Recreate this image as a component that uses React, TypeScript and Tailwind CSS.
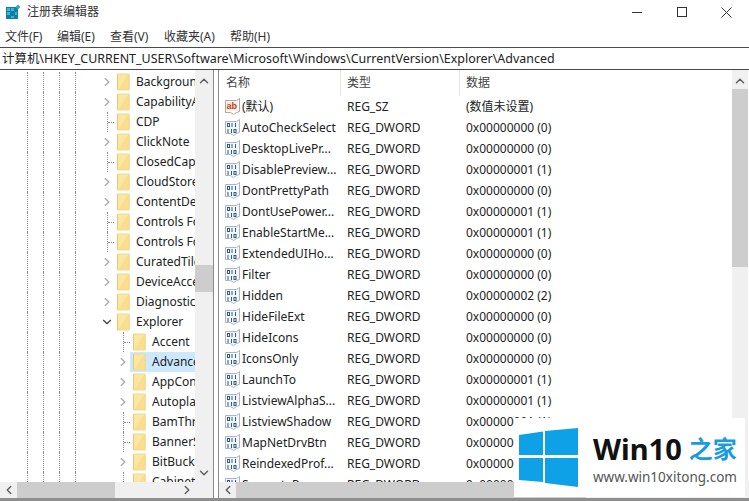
import React from "react";
import { ChevronDown, ChevronLeft, ChevronRight, ChevronUp } from "lucide-react";

const font = "font-['Noto_Sans','Noto_Sans_CJK_SC',sans-serif]";

const menus = [
  { label: "文件(F)", width: "w-[52px]" },
  { label: "编辑(E)", width: "w-[53px]" },
  { label: "查看(V)", width: "w-[54px]" },
  { label: "收藏夹(A)", width: "w-[66px]" },
  { label: "帮助(H)", width: "w-[52px]" },
];

// level 1 = child of CurrentVersion, level 2 = child of Explorer
const tree = [
  { name: "Background", level: 1, kind: "closed" },
  { name: "CapabilityAccessManager", level: 1, kind: "closed" },
  { name: "CDP", level: 1, kind: "leaf" },
  { name: "ClickNote", level: 1, kind: "closed" },
  { name: "ClosedCaptioning", level: 1, kind: "leaf" },
  { name: "CloudStore", level: 1, kind: "closed" },
  { name: "ContentDeliveryManager", level: 1, kind: "closed" },
  { name: "Controls Folder", level: 1, kind: "leaf" },
  { name: "Controls Folder", level: 1, kind: "leaf" },
  { name: "CuratedTileCollections", level: 1, kind: "closed" },
  { name: "DeviceAccess", level: 1, kind: "closed" },
  { name: "Diagnostics", level: 1, kind: "closed" },
  { name: "Explorer", level: 1, kind: "open" },
  { name: "Accent", level: 2, kind: "leaf" },
  { name: "Advanced", level: 2, kind: "closed", selected: true },
  { name: "AppContract", level: 2, kind: "closed" },
  { name: "Autoplay", level: 2, kind: "closed" },
  { name: "BamThrottling", level: 2, kind: "leaf" },
  { name: "BannerStore", level: 2, kind: "leaf" },
  { name: "BitBucket", level: 2, kind: "closed" },
  { name: "CabinetState", level: 2, kind: "leaf" },
];

const values = [
  ["AutoCheckSelect", "0x00000000 (0)"],
  ["DesktopLivePr...", "0x00000000 (0)"],
  ["DisablePreview...", "0x00000001 (1)"],
  ["DontPrettyPath", "0x00000000 (0)"],
  ["DontUsePower...", "0x00000001 (1)"],
  ["EnableStartMe...", "0x00000001 (1)"],
  ["ExtendedUIHo...", "0x00000000 (0)"],
  ["Filter", "0x00000000 (0)"],
  ["Hidden", "0x00000002 (2)"],
  ["HideFileExt", "0x00000000 (0)"],
  ["HideIcons", "0x00000000 (0)"],
  ["IconsOnly", "0x00000000 (0)"],
  ["LaunchTo", "0x00000001 (1)"],
  ["ListviewAlphaS...", "0x00000001 (1)"],
  ["ListviewShadow", "0x00000001 (1)"],
  ["MapNetDrvBtn", "0x00000000 (0)"],
  ["ReindexedProf...", "0x00000000 (0)"],
  ["SeparateProcess", "0x00000000 (0)"],
];

const RegeditIcon = () => (
  <svg width="16" height="16" viewBox="0 0 16 16" className="shrink-0">
    <rect x="1" y="3" width="12" height="12" fill="#0f7fa8" />
    <g fill="#3fb4d8">
      <rect x="2" y="4" width="3" height="3" />
      <rect x="6" y="4" width="3" height="3" />
      <rect x="2" y="8" width="3" height="3" />
      <rect x="10" y="8" width="2" height="3" />
      <rect x="6" y="12" width="3" height="2" />
    </g>
    <path d="M13 0.5l2.5 2.5-2.5 2.5-2.5-2.5z" fill="#35a5cc" />
  </svg>
);

const Folder = () => (
  <svg width="13" height="18" viewBox="0 0 13 18" className="shrink-0">
    <path d="M0.5 1h11.5v16h-11.5z" fill="#fbe7a1" stroke="#efd993" />
    <path d="M10 3l3-2v16h-12z" fill="#f6d77f" opacity="0.55" />
    <path d="M0.5 1v16" stroke="#e6c877" />
  </svg>
);

const Paper = ({ fill, stroke }: { fill: string; stroke: string }) => (
  <path d="M0.5 2.5h11l3 -2v13l-3 1 -3 2 -3 -2h-5z" fill={fill} stroke={stroke} />
);

const StringIcon = () => (
  <svg width="15" height="17" viewBox="0 0 15 17" className="shrink-0">
    <Paper fill="#fff" stroke="#a9a9a9" />
    <rect x="1.5" y="3.5" width="11" height="9" fill="#fbe9dd" />
    <text x="1.5" y="11" fontSize="9" fontWeight="700" fontFamily="Liberation Sans" fill="#c0431b">
      ab
    </text>
  </svg>
);

// binary 011 / 110 on a sheet of paper
const DwordIcon = () => (
  <svg width="15" height="17" viewBox="0 0 15 17" className="shrink-0">
    <Paper fill="#f4f7fb" stroke="#aab4c2" />
    <g fill="none" stroke="#2c5a94">
      <rect x="2.5" y="4.5" width="2" height="3" />
      <path d="M7 4v4M10.5 4v4" />
      <path d="M3 10v4M6.5 10v4" />
      <rect x="9" y="10.5" width="2" height="3" />
    </g>
  </svg>
);

const TreeRow = ({ item }: { item: (typeof tree)[number] }) => (
  <div className="flex h-5 shrink-0 items-center pl-[27px]">
    {[0, 1, 2, 3].map((i) => (
      <div key={i} className="h-full w-4 shrink-0 border-l border-dotted border-[#8c8c8c]" />
    ))}
    <div className={item.level === 2 ? "w-[25px] shrink-0" : "w-[9px] shrink-0"} />
    <div className="flex h-full w-[14px] shrink-0 items-center justify-center">
      {item.kind === "closed" && <ChevronRight size={14} strokeWidth={2} className="text-[#a6a6a6]" />}
      {item.kind === "open" && <ChevronDown size={14} strokeWidth={2} className="text-[#404040]" />}
      {item.kind === "leaf" && (
        <div className="ml-[7px] flex h-full w-[7px] items-center border-l border-dotted border-[#8c8c8c]">
          <div className="w-full border-t border-dotted border-[#8c8c8c]" />
        </div>
      )}
    </div>
    <div
      className={`flex h-full min-w-0 flex-1 items-center gap-[6px] overflow-hidden pl-[3px] ${
        item.selected ? "bg-[#cce8ff]" : ""
      }`}
    >
      <Folder />
      <span className="whitespace-nowrap">{item.name}</span>
    </div>
  </div>
);

const ValueRow = ({ icon, name, type, data }: { icon: React.ReactNode; name: string; type: string; data: string }) => (
  <div className="flex h-[21px] shrink-0 items-center">
    <div className="flex w-[122px] shrink-0 items-center gap-[2px] overflow-hidden pl-[6px]">
      {icon}
      <span className="whitespace-nowrap">{name}</span>
    </div>
    <div className="w-[119px] shrink-0 pl-[6px]">{type}</div>
    <div className="pl-[6px] whitespace-nowrap">{data}</div>
  </div>
);

const App = () => {
  return (
    <div className={`relative flex h-[501px] w-[749px] flex-col overflow-hidden bg-white text-[12px] text-[#222] ${font}`}>
      {/* title bar */}
      <div className="flex h-6 shrink-0 items-center">
        <div className="flex flex-1 items-center gap-[6px] pl-[5px] text-[12px] text-[#333]">
          <RegeditIcon />
          <span>注册表编辑器</span>
        </div>
        <div className="flex h-full w-[45px] items-center justify-center">
          <div className="h-px w-[10px] bg-[#333]" />
        </div>
        <div className="flex h-full w-[45px] items-center justify-center">
          <div className="h-[10px] w-[10px] border border-[#333]" />
        </div>
        <div className="flex h-full w-[45px] items-center justify-center">
          <svg width="11" height="11" viewBox="0 0 11 11">
            <path d="M0.5 0.5l10 10M10.5 0.5l-10 10" stroke="#333" fill="none" />
          </svg>
        </div>
      </div>

      {/* menu */}
      <div className="flex h-[23px] shrink-0 items-center pl-[5px] pt-[2px] text-[12px] text-[#333]">
        {menus.map((m) => (
          <div key={m.label} className={`${m.width} whitespace-nowrap`}>
            {m.label}
          </div>
        ))}
      </div>

      {/* address bar */}
      <div className="flex h-[23px] shrink-0 items-center whitespace-nowrap border-y border-[#4a4a4a] pl-[2px] pt-[2px] text-[12.45px] text-[#222]">
        计算机\HKEY_CURRENT_USER\Software\Microsoft\Windows\CurrentVersion\Explorer\Advanced
      </div>

      <div className="flex min-h-0 flex-1">
        {/* tree pane */}
        <div className="flex w-[214px] shrink-0 flex-col border-r border-[#8a8a8a]">
          <div className="flex min-h-0 flex-1">
            <div className="flex w-[195px] shrink-0 flex-col overflow-hidden pt-[2px]">
              {tree.map((item, i) => (
                <TreeRow key={i} item={item} />
              ))}
            </div>
            <div className="flex flex-1 flex-col items-center bg-[#f0f0f0]">
              <ChevronUp size={14} strokeWidth={2.5} className="mt-[4px] shrink-0 text-[#606060]" />
              <div className="mt-[177px] h-[27px] w-full shrink-0 bg-[#cdcdcd]" />
              <div className="flex-1" />
              <ChevronDown size={14} strokeWidth={2.5} className="mb-[2px] shrink-0 text-[#606060]" />
            </div>
          </div>
          <div className="flex h-4 shrink-0 items-center bg-[#f0f0f0]">
            <ChevronLeft size={14} strokeWidth={2.5} className="ml-[2px] shrink-0 text-[#606060]" />
            <div className="ml-px h-full w-[98px] bg-[#cdcdcd]" />
            <div className="flex-1" />
            <ChevronRight size={14} strokeWidth={2.5} className="mr-[19px] shrink-0 text-[#606060]" />
          </div>
        </div>

        <div className="w-[4px] shrink-0" />

        {/* value pane */}
        <div className="flex min-w-0 flex-1 flex-col border-l border-[#8a8a8a]">
          <div className="flex min-h-0 flex-1">
            <div className="flex min-w-0 flex-1 flex-col overflow-hidden">
              <div className="flex h-[26px] shrink-0 items-center text-[#444]">
                <div className="flex h-full w-[122px] shrink-0 items-center border-r border-[#e5e5e5] pl-[7px]">名称</div>
                <div className="flex h-full w-[119px] shrink-0 items-center border-r border-[#e5e5e5] pl-[6px]">类型</div>
                <div className="pl-[6px]">数据</div>
              </div>
              <ValueRow icon={<StringIcon />} name="(默认)" type="REG_SZ" data="(数值未设置)" />
              {values.map(([name, data]) => (
                <ValueRow key={name} icon={<DwordIcon />} name={name} type="REG_DWORD" data={data} />
              ))}
            </div>
            <div className="flex w-[16px] shrink-0 flex-col items-center bg-[#f0f0f0]">
              <ChevronUp size={14} strokeWidth={2.5} className="mt-[4px] shrink-0 text-[#606060]" />
              <div className="mt-[1px] h-[178px] w-full shrink-0 bg-[#cdcdcd]" />
            </div>
            <div className="w-px shrink-0" />
          </div>
          <div className="flex h-4 shrink-0 items-center bg-[#f0f0f0]">
            <ChevronLeft size={14} strokeWidth={2.5} className="ml-[2px] shrink-0 text-[#606060]" />
            <div className="ml-px h-full w-[350px] bg-[#cdcdcd]" />
          </div>
        </div>
      </div>
      <div className="h-[3px] shrink-0 bg-[#8f8f8f]" />

      {/* site watermark */}
      <div className="absolute left-[514px] top-[418px] flex h-[79px] w-[231px] items-center gap-[15px] bg-white pl-[5px]">
        <svg width="59" height="59" viewBox="0 0 59 59" className="shrink-0">
          <g fill="#0ea1e8">
            <path d="M0 7l24-3.5v23.5h-24z" />
            <path d="M26 3l33-3v27h-33z" />
            <path d="M0 30h24v24l-24-2z" />
            <path d="M26 30h33v29l-33-4z" />
          </g>
        </svg>
        <div className="flex flex-col pt-[3px]">
          <div className="flex items-center gap-[7px]">
            <span className="text-[29px] font-bold leading-[36px] text-[#111]">Win10</span>
            <span className="text-[24px] font-bold leading-[36px] text-[#1a9be0]">之家</span>
          </div>
          <span className="text-[13.5px] leading-[20px] text-[#555]">www.win10xitong.com</span>
        </div>
      </div>
    </div>
  );
};

export default App;
